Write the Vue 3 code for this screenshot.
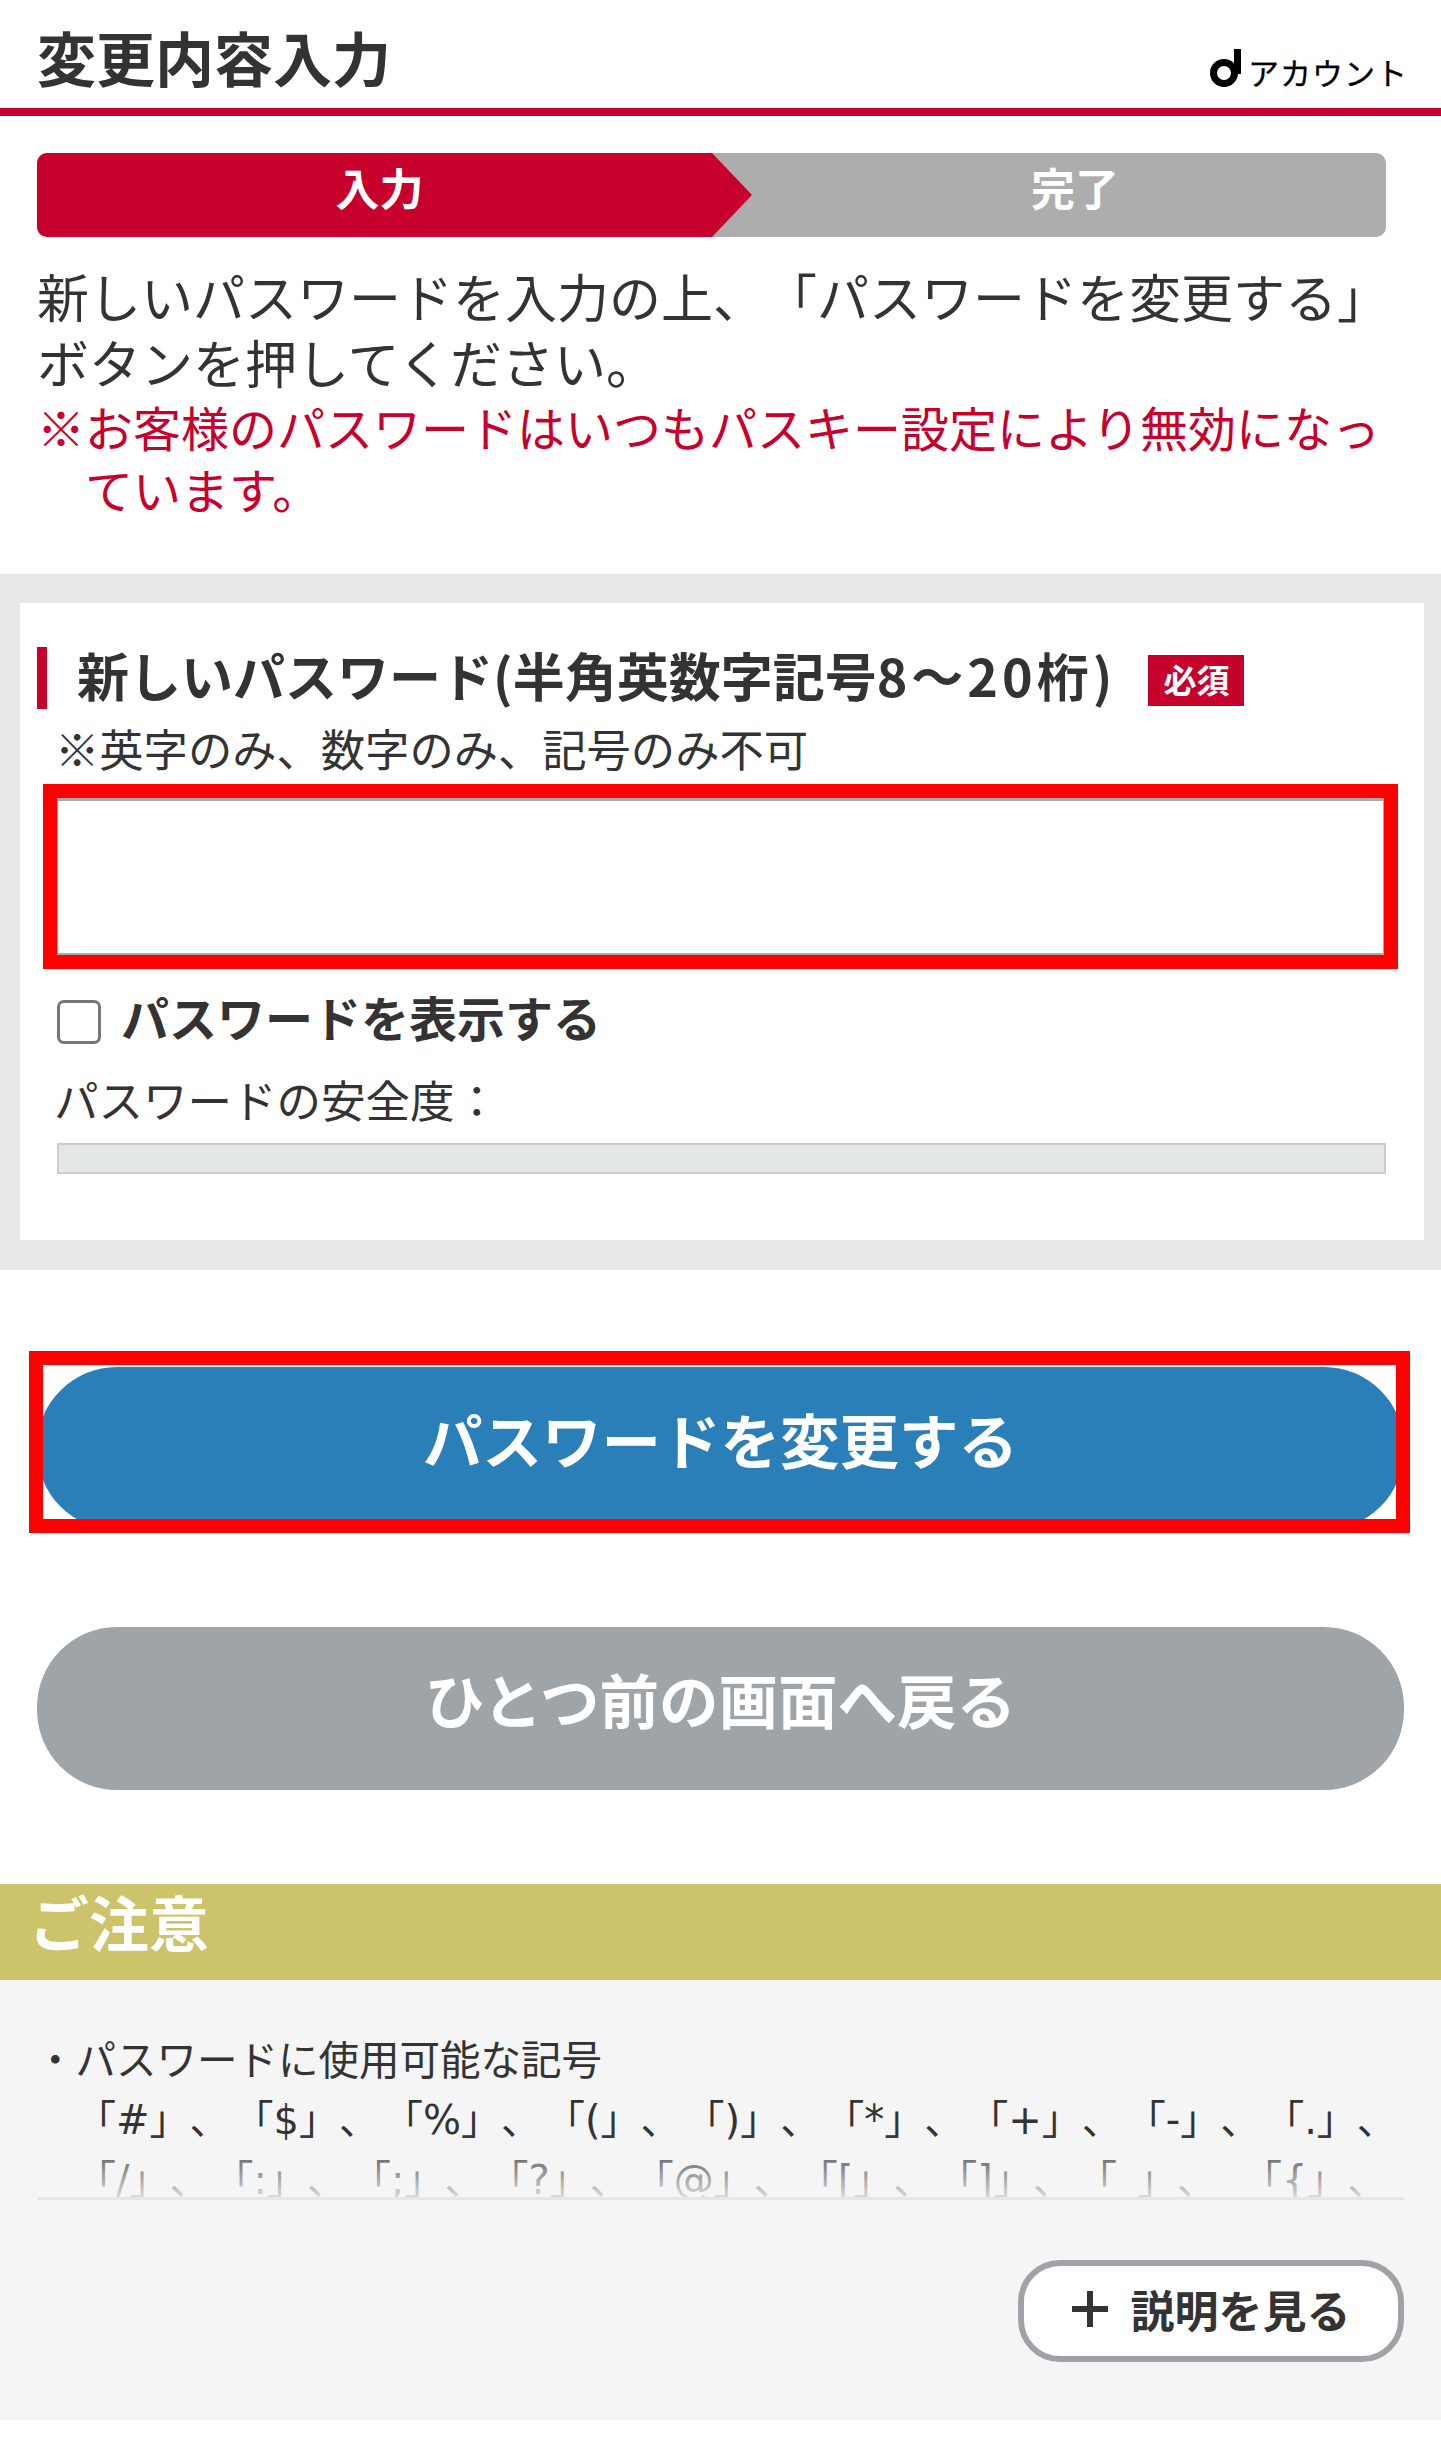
<script setup>
const symbolLines = [
  ['#', '$', '%', '(', ')', '*', '+', '-', '.'],
  ['/', ':', ';', '?', '@', '[', ']', '_', '{'],
]
</script>

<template>
  <div class="page">
    <header class="header">
      <h1 class="title">変更内容入力</h1>
      <div class="account">
        <svg class="d-logo" width="31" height="38" viewBox="0 0 31 38" aria-hidden="true">
          <circle cx="14" cy="24" r="10.5" fill="none" stroke="#000" stroke-width="7" />
          <rect x="24" y="0" width="7" height="25" fill="#000" />
        </svg>
        <span class="account-text">アカウント</span>
      </div>
    </header>

    <div class="steps">
      <div class="step step-on">入力</div>
      <div class="step step-off">完了</div>
    </div>

    <p class="lead">新しいパスワードを入力の上、「パスワードを変更する」<br />ボタンを押してください。</p>
    <p class="warn">※お客様のパスワードはいつもパスキー設定により無効になっ<br />ています。</p>

    <section class="band">
      <div class="panel">
        <div class="label-row">
          <h2 class="label">新しいパスワード(半角英数字記号<span class="label-num">8〜20桁</span>)</h2>
          <span class="badge">必須</span>
        </div>
        <p class="note">※英字のみ、数字のみ、記号のみ不可</p>
        <input class="field" type="password" />
        <label class="check-row">
          <span class="check"></span>
          <span class="check-text">パスワードを表示する</span>
        </label>
        <p class="strength">パスワードの安全度：</p>
        <div class="meter"></div>
      </div>
    </section>

    <div class="btn btn-primary">
      パスワードを変更する
      <span class="mark"></span>
    </div>
    <div class="btn btn-back">ひとつ前の画面へ戻る</div>

    <h3 class="notice-head">ご注意</h3>
    <section class="notice">
      <div class="notice-clip">
        <p class="notice-line">・パスワードに使用可能な記号</p>
        <p v-for="(line, i) in symbolLines" :key="i" class="symbols">
          <span v-for="s in line" :key="s" class="sym" :class="{ wide: s === '_' }">「{{ s }}」、</span>
        </p>
        <div class="fade"></div>
      </div>
      <div class="more-row">
        <div class="more">
          <svg width="36" height="36" viewBox="0 0 36 36" aria-hidden="true">
            <rect x="15" y="0" width="6" height="36" fill="#333" />
            <rect x="0" y="15" width="36" height="6" fill="#333" />
          </svg>
          <span>説明を見る</span>
        </div>
      </div>
    </section>
  </div>
</template>

<style>
html, body { margin: 0; background: #fff; }
</style>

<style scoped>
.page {
  width: 1441px;
  height: 2448px;
  overflow: hidden;
  background: #fff;
  color: #333;
  font-family: "Noto Sans CJK JP", "Noto Sans", sans-serif;
  text-spacing-trim: space-all;
  font-feature-settings: "chws" 0;
}
h1, h2, h3, p { margin: 0; }

.header {
  height: 108px;
  border-bottom: 8px solid #c8002c;
  padding: 0 37px;
  display: flex;
  justify-content: space-between;
  align-items: flex-end;
}
.title {
  font-size: 59px;
  font-weight: 700;
  line-height: 70px;
  margin-bottom: 16px;
}
.account {
  display: flex;
  align-items: flex-end;
  gap: 7px;
  margin-bottom: 21px;
  color: #000;
}
.d-logo { display: block; }
.account-text {
  font-size: 31px;
  line-height: 36px;
  letter-spacing: 1px;
  margin-right: -4px;
  margin-bottom: -3px;
  -webkit-text-stroke: 0.3px #000;
}

.steps {
  margin: 37px 0 0 37px;
  width: 1349px;
  height: 84px;
  border-radius: 10px;
  overflow: hidden;
  background: #adadad;
  display: flex;
  color: #fff;
  font-size: 44px;
  font-weight: 700;
}
.step {
  display: flex;
  align-items: center;
  justify-content: center;
  padding-bottom: 17px;
  box-sizing: border-box;
}
.step-on {
  flex: 0 0 715px;
  padding-right: 30px;
  background: #c8002c;
  clip-path: polygon(0 0, 675px 0, 100% 50%, 675px 100%, 0 100%);
}
.step-off {
  flex: 1;
  padding-left: 12px;
}

.lead {
  margin: 26px 0 0 37px;
  font-size: 52px;
  line-height: 66px;
  white-space: nowrap;
}
.warn {
  margin: 0 0 0 37px;
  font-size: 48px;
  line-height: 62px;
  color: #c8002c;
  padding-left: 1em;
  text-indent: -1em;
  white-space: nowrap;
}

.band {
  margin-top: 55px;
  height: 696px;
  box-sizing: border-box;
  padding: 29px 17px 30px 20px;
  background: #e8e8e8;
}
.panel {
  height: 637px;
  box-sizing: border-box;
  padding-top: 44px;
  background: #fff;
}
.label-row {
  display: flex;
  align-items: center;
  margin-left: 17px;
  height: 62px;
  border-left: 10px solid #c8002c;
  padding-left: 30px;
}
.label {
  font-size: 52px;
  font-weight: 700;
  line-height: 62px;
  white-space: nowrap;
  margin-bottom: 6px;
}
.label-num {
  letter-spacing: 4px;
}
.badge {
  margin-left: 36px;
  margin-top: 5px;
  width: 96px;
  height: 51px;
  display: flex;
  align-items: center;
  justify-content: center;
  background: #c8002c;
  color: #fff;
  font-size: 33px;
  font-weight: 700;
  padding-bottom: 3px;
  box-sizing: border-box;
}
.note {
  margin: 9px 0 0 35px;
  font-size: 44.3px;
  line-height: 60px;
}
.field {
  display: block;
  margin: 20px 0 0 37px;
  width: 1327px;
  height: 157px;
  box-sizing: border-box;
  background: #fff;
  border: 1px solid #aaa;
  border-top-width: 3px;
  border-bottom-width: 2px;
  outline: 14px solid #f00;
}
.check-row {
  display: flex;
  align-items: center;
  margin: 45px 0 0 37px;
  height: 44px;
  gap: 20px;
}
.check {
  width: 44px;
  height: 44px;
  box-sizing: border-box;
  border: 3px solid #767676;
  border-radius: 7px;
  background: #fff;
}
.check-text {
  font-size: 48px;
  font-weight: 700;
  line-height: 60px;
  margin-bottom: 12px;
}
.strength {
  margin: 25px 0 0 34px;
  font-size: 44.5px;
  line-height: 60px;
}
.meter {
  margin: 14px 0 0 37px;
  width: 1329px;
  height: 31px;
  box-sizing: border-box;
  background: #e4e7e8;
  border: 2px solid #ccc;
}

.btn {
  position: relative;
  margin-left: 37px;
  width: 1367px;
  height: 163px;
  border-radius: 80px;
  display: flex;
  align-items: center;
  justify-content: center;
  color: #fff;
  font-size: 59.5px;
  font-weight: 700;
  padding-bottom: 22px;
  box-sizing: border-box;
}
.btn-primary {
  margin-top: 97px;
  background: #2b7fb8;
}
.btn-back {
  margin-top: 97px;
  background: #9fa4a8;
}
.mark {
  position: absolute;
  left: -8px;
  right: -6px;
  top: -16px;
  bottom: -3px;
  border: 14px solid #f00;
  background:
    linear-gradient(#fff, #fff) top / 100% 2px no-repeat;
}

.notice-head {
  margin-top: 94px;
  height: 96px;
  box-sizing: border-box;
  padding-left: 29px;
  background: #cdc36b;
  color: #fff;
  font-size: 60px;
  font-weight: 700;
  line-height: 74px;
}
.notice {
  height: 440px;
  box-sizing: border-box;
  padding-top: 45px;
  background: #f5f5f5;
}
.notice-clip {
  position: relative;
  margin: 0 37px;
  height: 175px;
  box-sizing: border-box;
  overflow: hidden;
  border-bottom: 3px solid #e8e8e0;
}
.notice-line {
  margin-left: -2px;
  font-size: 40.5px;
  line-height: 65px;
  white-space: nowrap;
}
.symbols {
  padding-left: 39px;
  font-family: "DejaVu Sans", "Noto Sans CJK JP", sans-serif;
  font-size: 40px;
  line-height: 60px;
  white-space: nowrap;
  display: flex;
}
.sym {
  margin-right: 4px;
  white-space: pre;
}
.wide {
  margin-right: 25px;
}
.fade {
  position: absolute;
  left: 0;
  right: 0;
  bottom: 0;
  height: 62px;
  background: linear-gradient(rgba(245, 245, 245, 0), rgba(245, 245, 245, 0.85));
}
.more-row {
  display: flex;
  justify-content: flex-end;
  margin: 60px 37px 0 0;
}
.more {
  width: 386px;
  height: 102px;
  box-sizing: border-box;
  border: 6px solid #9fa3a7;
  border-radius: 42px;
  background: #fff;
  display: flex;
  align-items: center;
  justify-content: center;
  gap: 23px;
  font-size: 44px;
  font-weight: 700;
  padding-bottom: 4px;
}
</style>
